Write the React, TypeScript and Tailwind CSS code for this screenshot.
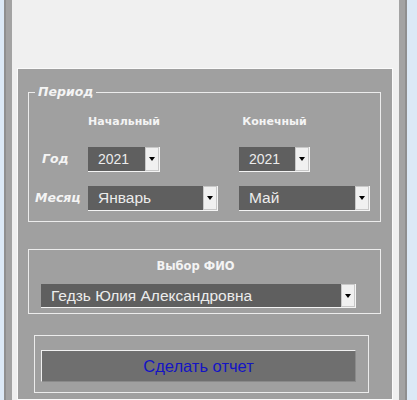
import React from "react";

const font = { fontFamily: '"Liberation Sans", Arial, sans-serif' };
const dv = { fontFamily: '"DejaVu Sans", Verdana, sans-serif' };

function Arrow() {
  return (
    <div className="w-[14px] self-stretch bg-[#f0f0f0] border border-[#c8c8c8] flex items-center justify-center">
      <svg width="6" height="4" viewBox="0 0 6 4">
        <path d="M0 0 H6 L3 4 Z" fill="#000" />
      </svg>
    </div>
  );
}

function Select({ cls, text, tcls }: { cls: string; text: string; tcls: string }) {
  return (
    <div className={`flex bg-[#5f5f5f] border-b border-r border-[#f4f4f4] ${cls}`}>
      <div className={`flex-1 flex items-center pl-[10px] text-[#ececec] leading-none ${tcls}`}>{text}</div>
      <Arrow />
    </div>
  );
}

export default function App() {
  return (
    <div className="w-[417px] h-[400px] overflow-hidden bg-[#dce9f6] pl-[4px] pr-[10px]" style={font}>
      <div className="h-full bg-[#a3a3a3] pl-[6px] pr-[6px] border-x-2 border-[#8f8f8f]">
        <div className="h-full bg-[#f0f0f0] pt-[68px] pl-[5px] pr-[6px]">
          <div className="h-full border border-[#fbfbfb] bg-[#a0a0a0] flex flex-col">
            {/* Group 1 */}
            <fieldset className="mt-[15px] ml-[10px] mr-[11px] border border-[#ececec] pb-[10px]">
              <legend className="ml-[6px] px-[3px] text-[12.5px] font-bold italic text-[#f4f4f4] leading-[16px]" style={dv}>
                Период
              </legend>
              <div className="grid grid-cols-[59px_151px_1fr] mt-[15px]" style={dv}>
                <div />
                <div className="w-[72px] text-center text-[11px] font-bold text-[#f4f4f4] leading-[14px] whitespace-nowrap">Начальный</div>
                <div className="w-[71px] text-center text-[11px] font-bold text-[#f4f4f4] leading-[14px] whitespace-nowrap">Конечный</div>
              </div>
              <div className="grid grid-cols-[59px_151px_1fr] mt-[18px] items-center">
                <div className="pl-[13px] text-[12.5px] font-bold italic text-[#f4f4f4]" style={dv}>Год</div>
                <Select cls="w-[72px] h-[25px]" tcls="text-[14px]" text="2021" />
                <Select cls="w-[71px] h-[25px]" tcls="text-[14px]" text="2021" />
              </div>
              <div className="grid grid-cols-[59px_151px_1fr] mt-[14px] items-center">
                <div className="pl-[6px] text-[12.5px] font-bold italic text-[#f4f4f4]" style={dv}>Месяц</div>
                <Select cls="w-[130px] h-[25px]" tcls="text-[15.5px]" text="Январь" />
                <Select cls="w-[131px] h-[25px]" tcls="text-[15.5px]" text="Май" />
              </div>
            </fieldset>

            {/* Group 2 */}
            <div className="mt-[27px] ml-[10px] mr-[11px] border border-[#ececec] pl-[12px] pr-[24px] pt-[9px] pb-[5px]">
              <div className="text-center pr-[6px] text-[11.5px] font-bold text-[#f4f4f4] leading-[14px]" style={dv}>Выбор ФИО</div>
              <Select cls="mt-[11px] w-[315px] h-[24px]" tcls="text-[15.5px]" text="Гедзь Юлия Александровна" />
            </div>

            {/* Group 3 */}
            <div className="mt-[21px] ml-[16px] mr-[23px] border border-[#ececec] pl-[6px] pr-[12px] pt-[14px] pb-[10px]">
              <div className="w-[315px] h-[32px] bg-[#6f6f6f] border-t border-l border-[#f0f0f0] border-b border-r border-b-[#8a8a8a] border-r-[#8a8a8a] flex items-center justify-center text-[16.5px] text-[#1414c4]">
                Сделать отчет
              </div>
            </div>
          </div>
        </div>
      </div>
    </div>
  );
}
